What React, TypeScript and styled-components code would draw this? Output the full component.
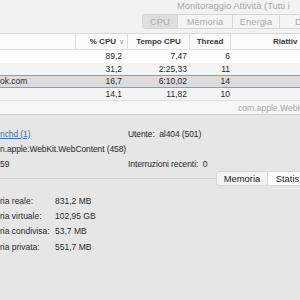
import React from "react"
import styled, { createGlobalStyle } from "styled-components"

const GlobalStyle = createGlobalStyle`
	html, body {
		margin: 0;
		padding: 0;
		background: #e6e6e6;
	}
	body {
		font-family: "Liberation Sans", Arial, sans-serif;
		font-size: 8.5px;
		color: #262626;
		-webkit-font-smoothing: antialiased;
	}
`

const Screen = styled.div`
	width: 300px;
	height: 300px;
	overflow: hidden;
	display: flex;
	flex-direction: column;
	background: #e6e6e6;
`

const Toolbar = styled.div`
	height: 34px;
	flex: 0 0 34px;
	background: #f2f2f2;
	display: flex;
	flex-direction: column;
	box-sizing: border-box;
	border-bottom: 1px solid #d9d9d9;
`

const Title = styled.div`
	height: 13px;
	padding-left: 177px;
	font-size: 9.4px;
	line-height: 12px;
	color: #a9a9a9;
	white-space: nowrap;
	overflow: hidden;
`

const Segments = styled.div<{ $left: number }>`
	display: flex;
	margin-left: ${(p) => p.$left}px;
	height: 15px;
	margin-top: 1px;
`

const Segment = styled.div<{ $width: number; $active?: boolean; $light?: boolean; $dark?: boolean }>`
	flex: 0 0 ${(p) => p.$width}px;
	box-sizing: border-box;
	border: 1px solid #d6d6d6;
	border-left-width: 0;
	&:first-child {
		border-left-width: 1px;
		border-radius: 3px 0 0 3px;
	}
	background: ${(p) => (p.$active ? "#dedede" : p.$light ? "#ffffff" : "#f4f4f4")};
	color: ${(p) => (p.$dark || p.$light ? "#222" : "#ababab")};
	font-size: 9.4px;
	line-height: 13px;
	text-align: center;
	white-space: nowrap;
	overflow: hidden;
`

const HeaderRow = styled.div`
	height: 16px;
	flex: 0 0 16px;
	display: flex;
	background: #fbfbfb;
	border-bottom: 1px solid #e2e2e2;
	box-sizing: border-box;
	font-weight: bold;
	color: #3a3a3a;
	font-size: 8px;
`

const HeaderCell = styled.div<{ $width: number; $align?: string; $pad?: number; $last?: boolean }>`
	flex: 0 0 ${(p) => p.$width}px;
	display: flex;
	align-items: center;
	justify-content: ${(p) => p.$align || "center"};
	padding: 0 ${(p) => p.$pad ?? 0}px;
	box-sizing: border-box;
	border-right: ${(p) => (p.$last ? "none" : "1px solid #dedede")};
	white-space: nowrap;
	overflow: hidden;
`

const Chevron = styled.span`
	font-weight: normal;
	color: #9a9a9a;
	margin-left: 3px;
	font-size: 7px;
`

const Row = styled.div<{ $alt?: boolean; $selected?: boolean }>`
	height: 12.5px;
	flex: 0 0 12.5px;
	display: flex;
	align-items: center;
	box-sizing: border-box;
	background: ${(p) => (p.$selected ? "#dcdcdc" : p.$alt ? "#f4f4f4" : "#ffffff")};
	border-top: ${(p) => (p.$selected ? "1px solid #6ea6d2" : "none")};
	border-bottom: ${(p) => (p.$selected ? "1px solid #6ea6d2" : "none")};
	color: #2a2a2a;
`

const Cell = styled.div<{ $width: number; $pad?: number }>`
	flex: 0 0 ${(p) => p.$width}px;
	box-sizing: border-box;
	text-align: right;
	padding-right: ${(p) => p.$pad ?? 0}px;
	white-space: nowrap;
	overflow: hidden;
`

const NameCell = styled(Cell)`
	text-align: left;
`

const InspectorBar = styled.div`
	height: 15px;
	flex: 0 0 15px;
	background: #f6f6f6;
	border-top: 1px solid #e0e0e0;
	border-bottom: 1px solid #cfcfcf;
	box-sizing: border-box;
	padding-left: 238px;
	color: #a6a6a6;
	font-size: 8.6px;
	line-height: 14px;
	white-space: nowrap;
	overflow: hidden;
`

const Inspector = styled.div`
	flex: 1;
	background: #e6e6e6;
	display: flex;
	flex-direction: column;
	padding-top: 11px;
`

const InfoGrid = styled.div`
	display: grid;
	grid-template-columns: 128px 1fr;
	grid-auto-rows: 15px;
	align-items: center;
	white-space: nowrap;
	letter-spacing: -0.1px;
`

const InfoCell = styled.div`
	white-space: pre;
`

const Link = styled.span`
	color: #3f6fb8;
	text-decoration: underline;
`

const TabBox = styled.div`
	margin-top: 7px;
	border-top: 1px solid #d4d4d4;
	position: relative;
	flex: 1;
	padding-top: 14px;
`

const TabStrip = styled.div`
	position: absolute;
	top: -8px;
	left: 216px;
	display: flex;
	height: 15px;
`

const MemGrid = styled.div`
	display: grid;
	grid-template-columns: 55px 1fr;
	grid-auto-rows: 15.3px;
	align-items: center;
	white-space: nowrap;
	color: #2a2a2a;
`

const procs = [
	{ name: "", cpu: "89,2", time: "7,47", threads: "6" },
	{ name: "", cpu: "31,2", time: "2:25,33", threads: "11" },
	{ name: "ok.com", cpu: "16,7", time: "6:10,02", threads: "14", selected: true },
	{ name: "", cpu: "14,1", time: "11,82", threads: "10" },
]

const mem = [
	["ria reale:", "831,2 MB"],
	["ria virtuale:", "102,95 GB"],
	["ria condivisa:", "53,7 MB"],
	["ria privata:", "551,7 MB"],
]

export default function App() {
	return (
		<Screen>
			<GlobalStyle />
			<Toolbar>
				<Title>Monitoraggio Attività (Tutti i</Title>
				<Segments $left={142}>
					<Segment $width={36} $active>CPU</Segment>
					<Segment $width={55}>Memoria</Segment>
					<Segment $width={47}>Energia</Segment>
					<Segment $width={40}>Di</Segment>
				</Segments>
			</Toolbar>
			<HeaderRow>
				<HeaderCell $width={76}></HeaderCell>
				<HeaderCell $width={52} $align="flex-end" $pad={3}>
					% CPU<Chevron>∨</Chevron>
				</HeaderCell>
				<HeaderCell $width={62}>Tempo CPU</HeaderCell>
				<HeaderCell $width={41}>Thread</HeaderCell>
				<HeaderCell $width={80} $align="flex-start" $pad={42} $last>
					Riattiv
				</HeaderCell>
			</HeaderRow>
			{procs.map((p, i) => (
				<Row key={i} $alt={i % 2 === 1} $selected={p.selected}>
					<NameCell $width={76}>{p.name}</NameCell>
					<Cell $width={52} $pad={6}>{p.cpu}</Cell>
					<Cell $width={62} $pad={3}>{p.time}</Cell>
					<Cell $width={41} $pad={1}>{p.threads}</Cell>
				</Row>
			))}
			<InspectorBar>com.apple.WebK</InspectorBar>
			<Inspector>
				<InfoGrid>
					<InfoCell>
						<Link>nchd (1)</Link>
					</InfoCell>
					<InfoCell>Utente:  al404 (501)</InfoCell>
					<InfoCell>n.apple.WebKit.WebContent (458)</InfoCell>
					<InfoCell></InfoCell>
					<InfoCell>59</InfoCell>
					<InfoCell>Interruzioni recenti:  0</InfoCell>
				</InfoGrid>
				<TabBox>
					<TabStrip>
						<Segment $width={52} $dark>Memoria</Segment>
						<Segment $width={40} $light>Statis</Segment>
					</TabStrip>
					<MemGrid>
						{mem.map(([k, v]) => (
							<React.Fragment key={k}>
								<InfoCell>{k}</InfoCell>
								<InfoCell>{v}</InfoCell>
							</React.Fragment>
						))}
					</MemGrid>
				</TabBox>
			</Inspector>
		</Screen>
	)
}
